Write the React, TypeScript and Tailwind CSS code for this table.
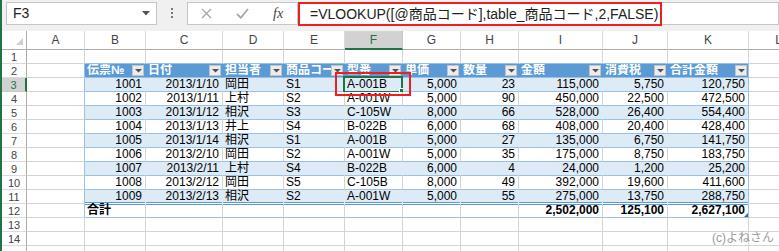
import React from 'react';

const LETTERS = ['', 'A', 'B', 'C', 'D', 'E', 'F', 'G', 'H', 'I', 'J', 'K', 'L'];

const HEAD = ['伝票№', '日付', '担当者', '商品コード', '型番', '単価', '数量', '金額', '消費税', '合計金額'];

const DATA = [
  ['1001', '2013/1/10', '岡田', 'S1', 'A-001B', '5,000', '23', '115,000', '5,750', '120,750'],
  ['1002', '2013/1/11', '上村', 'S2', 'A-001W', '5,000', '90', '450,000', '22,500', '472,500'],
  ['1003', '2013/1/12', '相沢', 'S3', 'C-105W', '8,000', '66', '528,000', '26,400', '554,400'],
  ['1004', '2013/1/13', '井上', 'S4', 'B-022B', '6,000', '68', '408,000', '20,400', '428,400'],
  ['1005', '2013/1/14', '相沢', 'S1', 'A-001B', '5,000', '27', '135,000', '6,750', '141,750'],
  ['1006', '2013/2/10', '岡田', 'S2', 'A-001W', '5,000', '35', '175,000', '8,750', '183,750'],
  ['1007', '2013/2/11', '上村', 'S4', 'B-022B', '6,000', '4', '24,000', '1,200', '25,200'],
  ['1008', '2013/2/12', '岡田', 'S5', 'C-105B', '8,000', '49', '392,000', '19,600', '411,600'],
  ['1009', '2013/2/13', '相沢', 'S2', 'A-001W', '5,000', '55', '275,000', '13,750', '288,750'],
];

const TOTAL = ['合計', '', '', '', '', '', '', '2,502,000', '125,100', '2,627,100'];

// B..K : true = right aligned
const RIGHT = [true, true, false, false, false, true, true, true, true, true];

const ROW_COUNT = 15;

function FilterButton() {
  return (
    <span className="mr-[1px] flex h-[11px] w-[12px] shrink-0 items-center justify-center border border-[#c3c3c3] bg-[#ececec]">
      <svg width="7" height="4" viewBox="0 0 7 4">
        <path d="M0 0h7L3.5 3.5z" fill="#505050" />
      </svg>
    </span>
  );
}

function ColumnHeader({ c }: { c: number }) {
  if (c === 0) {
    return (
      <div className="flex h-[19px] items-end justify-end border-r border-b border-r-[#ababab] border-b-[#ababab] bg-white pr-[3px] pb-[4px]">
        <svg width="7" height="7" viewBox="0 0 7 7">
          <polygon points="7,0 7,7 0,7" fill="#cfcfcf" />
        </svg>
      </div>
    );
  }
  if (c === 6) {
    return (
      <div className="flex h-[19px] items-center justify-center border-r border-b-2 border-r-[#c6c6c6] border-b-[#217346] bg-[#d2d2d2] text-[12px] text-[#217346]">
        {LETTERS[c]}
      </div>
    );
  }
  return (
    <div className="flex h-[19px] items-center justify-center border-r border-b border-r-[#dadada] border-b-[#ababab] bg-white text-[12px] text-[#444]">
      {LETTERS[c]}
    </div>
  );
}

function RowHeader({ r }: { r: number }) {
  const label = r < ROW_COUNT ? r : '';
  if (r === 3) {
    return (
      <div className="flex h-[14px] items-center justify-center border-r-2 border-b border-r-[#217346] border-b-[#c6c6c6] bg-[#d2d2d2] text-[11px] leading-[12px] text-[#217346]">
        {label}
      </div>
    );
  }
  return (
    <div className="flex h-[14px] items-center justify-center border-r border-b border-r-[#ababab] border-b-[#dadada] bg-white text-[11px] leading-[12px] text-[#444]">
      {label}
    </div>
  );
}

function cellBox(r: number, c: number) {
  const inTable = c >= 2 && c <= 11;
  const lastCol = c === 11;

  if (r === 1 && inTable) return 'bg-white border-r border-b border-r-[#d4d4d4] border-b-[#9bc2e6]';
  if (c === 1 && r >= 2 && r <= 12) return 'bg-white border-r border-b border-r-[#9bc2e6] border-b-[#d4d4d4]';
  if (!inTable || r > 12) return 'bg-white border-r border-b border-r-[#d4d4d4] border-b-[#d4d4d4]';

  if (r === 2) {
    return lastCol
      ? 'bg-[#5b9bd5] border-r border-b border-r-[#9bc2e6] border-b-[#9bc2e6]'
      : 'bg-[#5b9bd5] border-r border-b border-r-[#5b9bd5] border-b-[#9bc2e6]';
  }
  // row 11: first line of the double rule sits inside the cell, the gap is the border
  if (r === 11) {
    return lastCol
      ? 'bg-[#ddebf7] border-r border-b border-r-[#9bc2e6] border-b-white shadow-[inset_0_-1px_0_#5b9bd5]'
      : 'bg-[#ddebf7] border-r border-b border-r-[#ddebf7] border-b-white shadow-[inset_0_-1px_0_#5b9bd5]';
  }
  if (r === 12) {
    return lastCol
      ? 'bg-white border-r border-b border-r-[#9bc2e6] border-b-[#9bc2e6] shadow-[inset_0_1px_0_#5b9bd5]'
      : 'bg-white border-r border-b border-r-[#d4d4d4] border-b-[#9bc2e6] shadow-[inset_0_1px_0_#5b9bd5]';
  }
  if (r % 2 === 1) {
    return lastCol
      ? 'bg-[#ddebf7] border-r border-b border-r-[#9bc2e6] border-b-[#9bc2e6]'
      : 'bg-[#ddebf7] border-r border-b border-r-[#ddebf7] border-b-[#9bc2e6]';
  }
  return lastCol
    ? 'bg-white border-r border-b border-r-[#9bc2e6] border-b-[#9bc2e6]'
    : 'bg-white border-r border-b border-r-[#d4d4d4] border-b-[#9bc2e6]';
}

function Cell({ r, c }: { r: number; c: number }) {
  const box = cellBox(r, c);
  const i = c - 2;

  if (r === 2 && i >= 0 && i < 10) {
    return (
      <div className={`flex h-[14px] items-center ${box}`}>
        <span
          className={`min-w-0 flex-1 whitespace-nowrap pl-[2px] text-[12px] font-bold leading-[13px] text-white ${
            i === 3 ? 'overflow-hidden' : ''
          }`}
        >
          {HEAD[i]}
        </span>
        <FilterButton />
      </div>
    );
  }

  let text = '';
  let bold = false;
  if (i >= 0 && i < 10) {
    if (r >= 3 && r <= 11) text = DATA[r - 3][i];
    if (r === 12) {
      text = TOTAL[i];
      bold = true;
    }
  }

  const align =
    i >= 0 && i < 10 && RIGHT[i] && !(r === 12 && i === 0) ? 'justify-end pr-[3px]' : 'justify-start pl-[2px]';

  return (
    <div className={`relative flex h-[14px] items-center ${box} ${align}`}>
      <span className={`whitespace-nowrap text-[12px] leading-[13px] text-black ${bold ? 'font-bold' : ''}`}>
        {text}
      </span>
      {r === 3 && c === 6 && (
        <>
          <div className="pointer-events-none absolute -left-[2px] -top-[2px] h-[17px] w-[60px] border-2 border-[#217346]" />
          <div className="absolute left-[54px] top-[10px] h-[6px] w-[6px] border border-white bg-[#217346]" />
        </>
      )}
      {r === 12 && c === 11 && (
        <svg className="absolute right-0 bottom-0" width="4" height="4" viewBox="0 0 4 4">
          <polygon points="4,0 4,4 0,4" fill="#3f5fa8" />
        </svg>
      )}
    </div>
  );
}

function FormulaBar() {
  return (
    <div className="flex h-[31px] items-start pt-[2px]">
      <div className="ml-[4px] flex h-[23px] w-[151px] items-center justify-between border border-[#c6c6c6] bg-white pl-[6px] pr-[6px]">
        <span className="text-[14px] text-[#222]">F3</span>
        <svg width="8" height="5" viewBox="0 0 8 5">
          <path d="M0 0h8L4 4.5z" fill="#555" />
        </svg>
      </div>
      <div className="flex w-[30px] flex-col items-center gap-[2px] pt-[6px]">
        <span className="h-[2px] w-[2px] bg-[#777]" />
        <span className="h-[2px] w-[2px] bg-[#777]" />
        <span className="h-[2px] w-[2px] bg-[#777]" />
      </div>
      <div className="flex h-[23px] w-[111px] items-center border border-[#c6c6c6] bg-white pl-[13px]">
        <svg width="11" height="11" viewBox="0 0 11 11">
          <path d="M1 1L10 10M10 1L1 10" stroke="#a8a8a8" strokeWidth="1.4" />
        </svg>
        <svg className="ml-[24px]" width="13" height="11" viewBox="0 0 13 11">
          <path d="M1 6L4.8 9.8L12 1" stroke="#a8a8a8" strokeWidth="1.8" fill="none" />
        </svg>
        <span className="ml-[24px] font-['Liberation_Serif',serif] text-[14px] italic leading-none text-[#444]">fx</span>
      </div>
      <div className="relative h-[23px] flex-1 border border-[#c6c6c6] bg-white">
        <div className="absolute -left-px -top-px flex h-[24px] w-[364px] items-center whitespace-nowrap border-2 border-[#f01e1e] pl-[10px] text-[14px] text-[#222]">
          =VLOOKUP([@商品コード],table_商品コード,2,FALSE)
        </div>
      </div>
    </div>
  );
}

function Sheet() {
  const rows = Array.from({ length: ROW_COUNT }, (_, k) => k + 1);
  const cols = LETTERS.map((_, c) => c);

  return (
    <div className="relative grid grid-cols-[25px_58px_61px_77px_61px_61px_58px_58px_58px_84px_65px_81px_60px]">
      {cols.map((c) => (
        <ColumnHeader key={`h${c}`} c={c} />
      ))}
      {rows.map((r) =>
        cols.map((c) => (c === 0 ? <RowHeader key={`${r}-${c}`} r={r} /> : <Cell key={`${r}-${c}`} r={r} c={c} />))
      )}
      <div className="pointer-events-none absolute left-[333px] top-[41px] h-[24px] w-[76px] border-2 border-[#f01e1e]" />
      <span className="absolute left-[710px] top-[200px] text-[12px] leading-[14px] text-[#9a9a9a]">
        (c)よねさん
      </span>
    </div>
  );
}

export default function App() {
  return (
    <div className="relative h-[251px] w-[779px] overflow-hidden border-l-2 border-l-[#217346] bg-[#f0f0f0] font-['Liberation_Sans','Noto_Sans_CJK_JP',sans-serif]">
      <FormulaBar />
      <Sheet />
    </div>
  );
}
